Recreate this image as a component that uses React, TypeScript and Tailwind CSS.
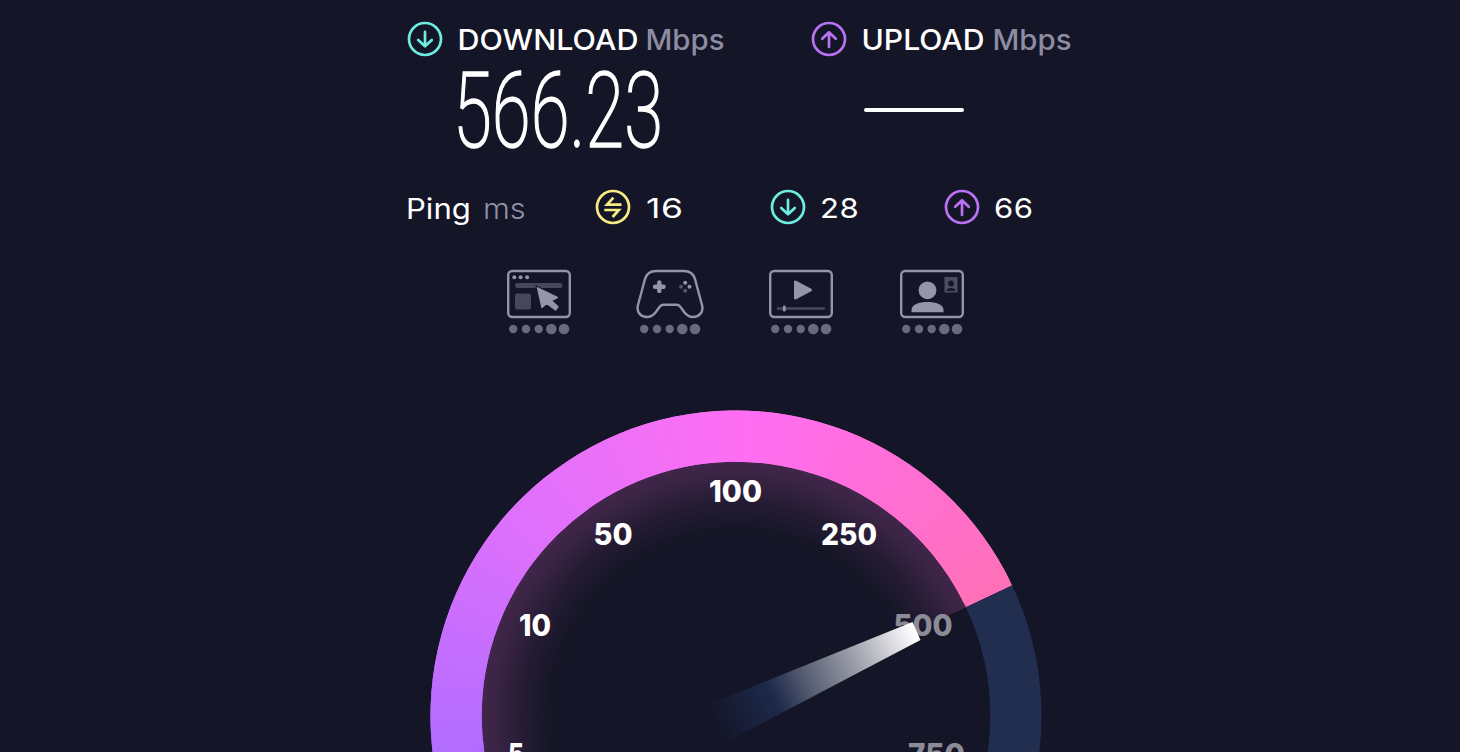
import clsx from "clsx";

const CX = 736;
const CY = 716;

const point = (deg: number, r: number) => {
  const a = (deg * Math.PI) / 180;
  return `${(CX + r * Math.cos(a)).toFixed(2)} ${(CY - r * Math.sin(a)).toFixed(2)}`;
};

// angle (counter-clockwise from east) -> rgb
const stops: [number, number[]][] = [
  [25.3, [255, 112, 184]],
  [60, [255, 110, 216]],
  [88, [255, 110, 243]],
  [110, [240, 112, 246]],
  [140, [221, 112, 252]],
  [165, [198, 110, 254]],
  [195, [170, 108, 255]],
];

const colorAt = (deg: number) => {
  const i = Math.max(
    1,
    stops.findIndex(([d]) => d >= deg),
  );
  const [d0, c0] = stops[i - 1];
  const [d1, c1] = stops[i];
  const t = (deg - d0) / (d1 - d0);
  return `rgb(${c0.map((c, k) => Math.round(c + (c1[k] - c) * t)).join(",")})`;
};

const segments = Array.from({ length: 168 }, (_, i) => {
  const from = 25.3 + i;
  return { from, to: from + 2, color: colorAt(from + 0.5) };
});

const ringPath = (from: number, to: number, outer = 305.5, inner = 254.3) =>
  `M${point(from, outer)}A${outer} ${outer} 0 0 0 ${point(to, outer)}L${point(to, inner)}A${inner} ${inner} 0 0 1 ${point(from, inner)}Z`;

const labels = [
  { text: "5", x: 508, y: 765, width: 16 },
  { text: "10", x: 519, y: 636, width: 32 },
  { text: "50", x: 593.5, y: 545, width: 39 },
  { text: "100", x: 709, y: 502, width: 53 },
  { text: "250", x: 821, y: 545, width: 56 },
  { text: "500", x: 893.5, y: 636, width: 59, dim: true },
  { text: "750", x: 908, y: 765, width: 57, dim: true },
];

function DirectionIcon({ kind }: { kind: "down" | "up" | "idle" }) {
  return (
    <svg
      viewBox="0 0 36 36"
      fill="none"
      stroke="currentColor"
      strokeWidth="2.7"
      strokeLinecap="round"
      strokeLinejoin="round"
      className={clsx(
        "size-9 shrink-0",
        kind === "down" && "text-[#6dece0]",
        kind === "up" && "text-[#ba72f4]",
        kind === "idle" && "text-[#f9ec85]",
      )}
    >
      <circle cx="18" cy="18" r="16" />
      {kind === "down" && <path d="M18 10.9v14.2M11.2 18.9l6.8 6.4 6.8-6.4" />}
      {kind === "up" && <path d="M18 25.9V11.3M11.2 17.7l6.8-6.4 6.8 6.4" />}
      {kind === "idle" && (
        <path
          strokeLinecap="butt"
          strokeLinejoin="miter"
          d="M26.5 15.6H12L18.4 8.6M9.3 21H23.8L17.6 28"
        />
      )}
    </svg>
  );
}

function Dots() {
  return (
    <svg viewBox="0 0 64 12" className="h-3 w-16 fill-[#6a697f]">
      <circle cx="6.2" cy="6" r="4.2" />
      <circle cx="19" cy="6" r="4.2" />
      <circle cx="31.7" cy="6" r="4.2" />
      <circle cx="44.3" cy="6" r="5.3" />
      <circle cx="57" cy="6" r="5.3" />
    </svg>
  );
}

function ActivityIcon({ kind }: { kind: "web" | "game" | "video" | "call" }) {
  return (
    <div className="flex w-17 flex-col items-center gap-1">
      <svg viewBox="0 0 68 50" className="h-[50px] w-17 text-[#9594ab]">
        {kind !== "game" && (
          <rect x="3.2" y="2" width="61.6" height="46" rx="4" fill="none" stroke="currentColor" strokeWidth="2.4" />
        )}
        {kind === "web" && (
          <g fill="currentColor">
            <circle cx="9.3" cy="8.2" r="2" />
            <circle cx="15.6" cy="8.2" r="2" />
            <circle cx="22.1" cy="8.2" r="2" />
            <rect x="10" y="14" width="47.5" height="5" rx="2.5" opacity=".4" />
            <rect x="10" y="24.5" width="16" height="16" rx="2" opacity=".4" />
            <path
              d="M32.5 18.8 37 38.5 41.5 34.3 50.5 41 53 37.8 46.2 31.5 52.3 28.5Z"
              stroke="#141526"
              strokeWidth="3"
            />
            <path
              d="M32.5 18.8 37 38.5 41.5 34.3 50.5 41 53 37.8 46.2 31.5 52.3 28.5Z"
              stroke="currentColor"
              strokeWidth="1.4"
              strokeLinejoin="round"
            />
          </g>
        )}
        {kind === "game" && (
          <>
            <path
              fill="none"
              stroke="currentColor"
              strokeWidth="2.4"
              strokeLinejoin="round"
              d="M20 2H48C54 2 57.5 5 59 10L66 36C68 43 63 48 57 48C53 48 50.5 46 48.5 43.5L44.5 38C43.5 36.5 42.5 35.8 41 35.8H27C25.5 35.8 24.5 36.5 23.5 38L19.5 43.5C17.5 46 15 48 11 48C5 48 0 43 2 36L9 10C10.5 5 14 2 20 2Z"
            />
            <path d="M23.3 13.5v8.4M19 17.7h8.6" stroke="currentColor" strokeWidth="4.4" strokeLinecap="round" />
            <g fill="currentColor">
              <circle cx="49.2" cy="13.7" r="2" />
              <circle cx="53.5" cy="17.7" r="2" />
              <circle cx="45" cy="17.7" r="2" opacity=".5" />
              <circle cx="49.2" cy="21.7" r="2" opacity=".5" />
            </g>
          </>
        )}
        {kind === "video" && (
          <>
            <path d="M28.5 13v16L43.5 21Z" fill="currentColor" stroke="currentColor" strokeWidth="3" strokeLinejoin="round" />
            <path d="M11 39.5H57" stroke="currentColor" strokeWidth="2.6" strokeLinecap="round" opacity=".4" />
            <path d="M17.3 38v3.2" stroke="currentColor" strokeWidth="2.8" strokeLinecap="round" />
          </>
        )}
        {kind === "call" && (
          <>
            <circle cx="29.5" cy="21.3" r="8.9" fill="currentColor" />
            <path d="M13.5 43.2V41C13.5 35.5 21 33 29.5 33S45.5 35.5 45.5 41v2.2Z" fill="currentColor" />
            <rect x="46.5" y="8" width="13" height="15.5" fill="currentColor" opacity=".45" />
            <circle cx="53" cy="14.5" r="2.9" fill="#141526" />
            <path d="M48.5 22c0-4 9-4 9 0Z" fill="#141526" />
          </>
        )}
      </svg>
      <Dots />
    </div>
  );
}

function SpeedHeading({ kind, title }: { kind: "down" | "up"; title: string }) {
  return (
    <div className="flex h-9 items-center">
      <DirectionIcon kind={kind} />
      <svg viewBox="0 0 270 36" className="ml-[14px] h-9 w-[270px] text-[28px] font-medium">
        <text x=".5" y="29" fill="#fff" textLength={kind === "down" ? 181 : 123} lengthAdjust="spacingAndGlyphs">
          {title}
        </text>
        <text x={kind === "down" ? 188.5 : 131.5} y="29" fill="#8d8ca2" textLength="79" lengthAdjust="spacingAndGlyphs">
          Mbps
        </text>
      </svg>
    </div>
  );
}

function PingValue({ kind, value }: { kind: "idle" | "down" | "up"; value: number }) {
  return (
    <div className="flex w-[174.5px] items-center gap-[14px]">
      <DirectionIcon kind={kind} />
      <span
        className={clsx(
          "inline-block origin-left pt-[3px] text-[27px] leading-9 tracking-[0.5px]",
          kind === "idle" ? "translate-x-px scale-x-[1.31]" : "scale-x-[1.15]",
        )}
      >
        {value}
      </span>
    </div>
  );
}

function Gauge() {
  return (
    <svg viewBox="400 400 672 352" className="h-[352px] w-[672px]">
      <defs>
        <radialGradient id="glow" gradientUnits="userSpaceOnUse" cx={CX} cy={CY} r="254.3">
          <stop offset=".72" stopColor="#ff6ee0" stopOpacity="0" />
          <stop offset=".84" stopColor="#ff6ee0" stopOpacity=".07" />
          <stop offset=".95" stopColor="#ff6ee0" stopOpacity=".165" />
          <stop offset="1" stopColor="#ff6ee0" stopOpacity=".19" />
        </radialGradient>
        <linearGradient id="needle" gradientUnits="userSpaceOnUse" x1="712" y1="724" x2="916" y2="631">
          <stop offset="0" stopColor="#1f2c52" stopOpacity="0" />
          <stop offset=".3" stopColor="#1f2d52" stopOpacity=".85" />
          <stop offset=".43" stopColor="#4b5369" />
          <stop offset=".7" stopColor="#9ea0ab" />
          <stop offset=".95" stopColor="#f2f2f5" />
          <stop offset="1" stopColor="#fff" />
        </linearGradient>
        <clipPath id="ring">
          <path d={ringPath(25.3, 200)} />
        </clipPath>
      </defs>
      <path
        d={`M${CX} ${CY}L${point(25.3, 254.3)}A254.3 254.3 0 0 0 ${point(200, 254.3)}Z`}
        fill="url(#glow)"
      />
      <path d={ringPath(-15, 25.3)} fill="#222e50" />
      <g clipPath="url(#ring)">
        {segments.map((s) => (
          <path key={s.from} d={ringPath(s.from, s.to, 312, 248)} fill={s.color} />
        ))}
      </g>
      <g fontSize="30" fontWeight="800">
        {labels.map((l) => (
          <text
            key={l.text}
            x={l.x}
            y={l.y}
            textLength={l.width}
            lengthAdjust="spacingAndGlyphs"
            fill={l.dim ? "#8c8c99" : "#fff"}
          >
            {l.text}
          </text>
        ))}
      </g>
      <path d="M707 705 912.5 622 920.5 640 717 747Z" fill="url(#needle)" />
    </svg>
  );
}

export default function App() {
  return (
    <main className="flex h-[752px] w-[1460px] flex-col overflow-hidden bg-[#141526] font-['Inter',sans-serif] text-white">
      <div className="flex pt-[21px] pl-[407px]">
        <section className="w-[404px]">
          <SpeedHeading kind="down" title="DOWNLOAD" />
          <svg
            viewBox="0 0 220 100"
            className="mt-[3px] ml-[49px] h-[100px] w-[220px] overflow-visible font-['Roboto',sans-serif]"
          >
            <text
              x="-3"
              y="87"
              fill="#fff"
              stroke="#fff"
              strokeWidth="1.5"
              fontSize="106"
              fontWeight="200"
              textLength="210"
              lengthAdjust="spacingAndGlyphs"
            >
              566.23
            </text>
          </svg>
        </section>
        <section>
          <SpeedHeading kind="up" title="UPLOAD" />
          <div className="mt-[51px] ml-[53px] h-1 w-[100px] rounded-sm bg-white" />
        </section>
      </div>

      <div className="mt-[29px] flex h-9 items-center pl-[406px]">
        <div className="flex w-[189px] items-baseline pt-[3px] text-[28px] leading-9">
          <span className="inline-block w-[77px]">
            <span className="inline-block origin-left scale-x-[1.11]">Ping</span>
          </span>
          <span className="inline-block origin-left scale-x-[1.1] font-light text-[#9291a7]">ms</span>
        </div>
        <PingValue kind="idle" value={16} />
        <PingValue kind="down" value={28} />
        <PingValue kind="up" value={66} />
      </div>

      <div className="mt-11 flex gap-[63px] pl-[505px]">
        <ActivityIcon kind="web" />
        <ActivityIcon kind="game" />
        <ActivityIcon kind="video" />
        <ActivityIcon kind="call" />
      </div>

      <div className="mt-auto flex pl-[400px]">
        <Gauge />
      </div>
    </main>
  );
}
